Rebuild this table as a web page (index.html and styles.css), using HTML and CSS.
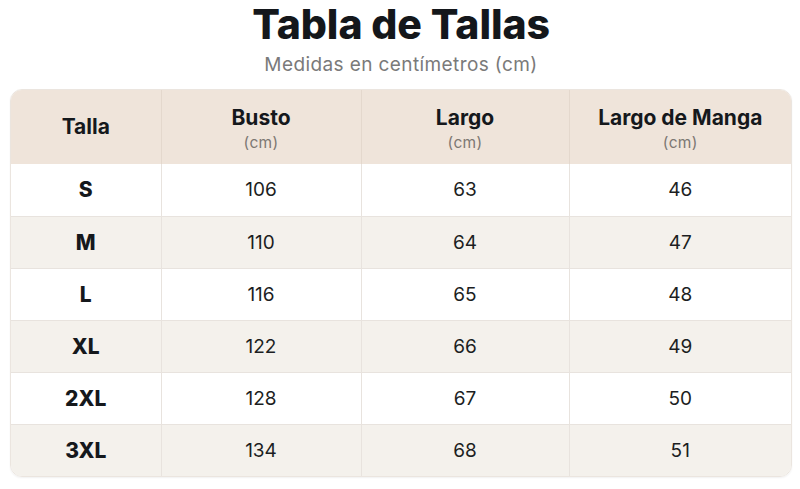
FILE: index.html
```html
<!DOCTYPE html>
<html lang="es">
<head>
<meta charset="utf-8">
<link rel="stylesheet" href="styles.css">
</head>
<body>
<div class="page">
  <h1 class="title">Tabla de Tallas</h1>
  <p class="subtitle">Medidas en centímetros (cm)</p>
  <div class="card">
    <table class="sizes">
      <colgroup>
        <col class="c1"><col class="c2"><col class="c3"><col class="c4">
      </colgroup>
      <thead>
        <tr>
          <th><span class="h">Talla</span></th>
          <th class="two"><span class="h">Busto</span><span class="unit">(cm)</span></th>
          <th class="two"><span class="h">Largo</span><span class="unit">(cm)</span></th>
          <th class="two"><span class="h">Largo de Manga</span><span class="unit">(cm)</span></th>
        </tr>
      </thead>
      <tbody>
        <tr><td class="size">S</td><td>106</td><td>63</td><td>46</td></tr>
        <tr><td class="size">M</td><td>110</td><td>64</td><td>47</td></tr>
        <tr><td class="size">L</td><td>116</td><td>65</td><td>48</td></tr>
        <tr><td class="size">XL</td><td>122</td><td>66</td><td>49</td></tr>
        <tr><td class="size">2XL</td><td>128</td><td>67</td><td>50</td></tr>
        <tr><td class="size">3XL</td><td>134</td><td>68</td><td>51</td></tr>
      </tbody>
    </table>
  </div>
</div>
</body>
</html>
```

FILE: styles.css
```css
* { box-sizing: border-box; }
html, body { margin: 0; padding: 0; background: #ffffff; }
body { font-family: "Inter", "Liberation Sans", sans-serif; color: #16181c; }
.page { width: 800px; height: 489px; padding: 4px 8px 0 10px; }
.title {
  margin: 0;
  text-align: center;
  font-size: 41px;
  line-height: 40px;
  font-weight: 800;
  letter-spacing: -0.1px;
  color: #14171b;
}
.subtitle {
  margin: 10px 0 0 0;
  text-align: center;
  font-size: 19px;
  line-height: 22px;
  letter-spacing: 0.4px;
  color: #7a7a7a;
  font-weight: 400;
}
.card {
  margin-top: 13px;
  border: 1px solid #ebe5df;
  border-radius: 12px;
  overflow: hidden;
  box-shadow: 0 1px 2px rgba(0,0,0,0.06);
}
.sizes { width: 100%; border-collapse: collapse; table-layout: fixed; }
.c1 { width: 150px; }
.c2 { width: 200px; }
.c3 { width: 208px; }
.c4 { width: auto; }
.sizes th {
  background: #efe4da;
  height: 74px;
  padding: 0;
  text-align: center;
  vertical-align: middle;
  border-left: 1px solid #e4d8cd;
  font-weight: 700;
}
.sizes th.two { padding-top: 5px; }
.sizes th:first-child, .sizes td:first-child { border-left: none; }
.h { display: block; font-size: 21px; line-height: 24px; font-weight: 700; color: #15181c; }
.unit { display: block; font-size: 15.5px; line-height: 20px; color: #7d7873; font-weight: 400; margin-top: 3px; letter-spacing: 0.3px; }
.sizes td {
  height: 52px;
  padding: 0;
  text-align: center;
  vertical-align: middle;
  font-size: 19px;
  color: #1c1e22;
  border-left: 1px solid #e8e3de;
  border-top: 1px solid #e8e3de;
}
.sizes tbody tr:first-child td { border-top: none; }
.sizes tbody tr:nth-child(even) td { background: #f4f1ec; }
.sizes td.size { font-weight: 800; font-size: 21px; color: #15181c; }
```
